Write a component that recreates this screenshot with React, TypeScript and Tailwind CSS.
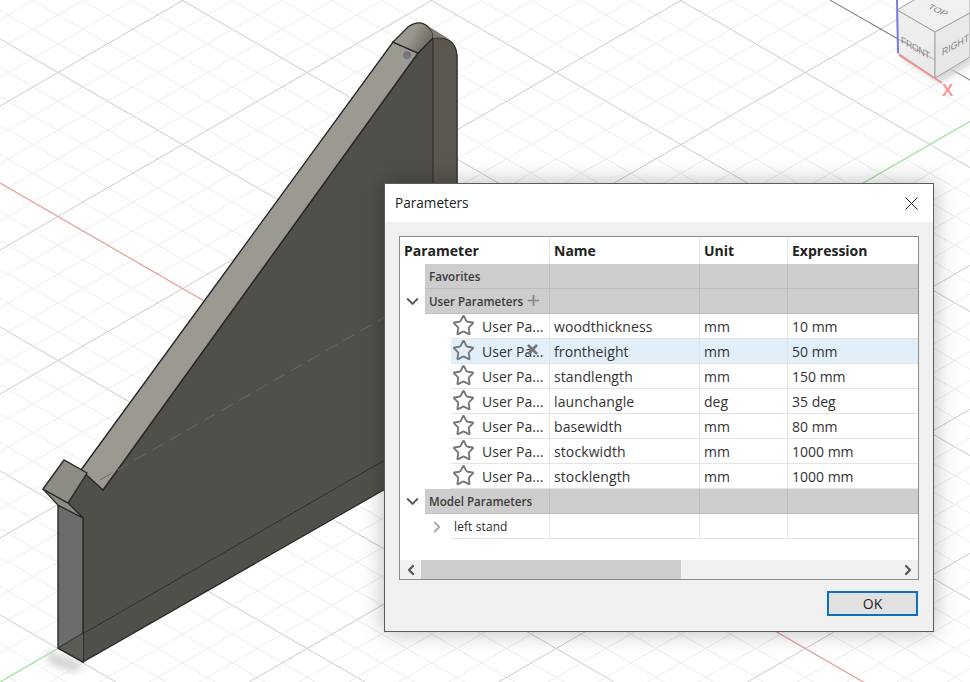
import React from "react";
import { ChevronDown, ChevronLeft, ChevronRight, Plus, Star, X } from "lucide-react";

const SLOPE = 0.578;
const W = 970;
const H = 682;

const userParams = [
  { name: "woodthickness", unit: "mm", expr: "10 mm" },
  { name: "frontheight", unit: "mm", expr: "50 mm", active: true },
  { name: "standlength", unit: "mm", expr: "150 mm" },
  { name: "launchangle", unit: "deg", expr: "35 deg" },
  { name: "basewidth", unit: "mm", expr: "80 mm" },
  { name: "stockwidth", unit: "mm", expr: "1000 mm" },
  { name: "stocklength", unit: "mm", expr: "1000 mm" },
];

// every 5th line of the ground grid is a major one
const gridOffsets: { k: number; major: boolean }[] = [];
for (let i = -30; i <= 50; i++) gridOffsets.push({ k: i * 28.8, major: i % 5 === 0 });

const Scene: React.FC = () => (
  <svg className="absolute inset-0" width={W} height={H} viewBox={`0 0 ${W} ${H}`}>
    <defs>
      <linearGradient id="cap" x1="0" y1="0" x2="1" y2="0.4">
        <stop offset="0" stopColor="#a5a298" />
        <stop offset="0.55" stopColor="#98958b" />
        <stop offset="1" stopColor="#6c6a62" />
      </linearGradient>
      <filter id="soft">
        <feGaussianBlur stdDeviation="4" />
      </filter>
    </defs>

    {gridOffsets.map(({ k, major }) => (
      <g key={k} stroke={major ? "#cbcbcb" : "#ececec"} strokeWidth="1">
        <line x1={0} y1={183 + k} x2={W} y2={183 + k + W * SLOPE} />
        <line x1={0} y1={106 + k} x2={W} y2={106 + k - W * SLOPE} />
      </g>
    ))}
    <line x1={0} y1={183} x2={W} y2={183 + W * SLOPE} stroke="#f0a0a0" strokeWidth="1.2" />
    <line x1={0} y1={682} x2={W} y2={682 - W * SLOPE} stroke="#a4e6a4" strokeWidth="1.2" />
    <line x1={830} y1={0} x2={970} y2={80} stroke="#777777" strokeWidth="1" />

    {/* shadow under the part */}
    <polygon points="46,650 84,664 76,672 50,664" fill="#cfcfcf" filter="url(#soft)" />

    {/* side face */}
    <path
      d="M83 518 L68 503 L87 473 L103 490 L418 53 L433 38 L442 38 Q456 40 457 56 L457 448 L83 662 Z"
      fill="#504f4a"
      stroke="#26262a"
      strokeWidth="1.2"
    />
    <path d="M433 38 L442 38 Q456 40 457 56 L457 200 L433 200 Z" fill="#5b574f" stroke="#2b2b2b" strokeWidth="1" />

    {/* sloped top */}
    <polygon points="81,470 393,42 418,53 103,490" fill="#9c9a90" stroke="#26262a" strokeWidth="1.4" />
    <path d="M393 42 L408 27 Q418 20 426 25 Q434 31 433 38 L418 53 Z" fill="url(#cap)" stroke="#26262a" strokeWidth="1.2" />
    <path d="M423 23 L449 39 Q440 36 433 38 Q434 29 423 23 Z" fill="#7d7a71" />
    <circle cx="407" cy="55" r="4" fill="#77767a" />

    {/* dashed and hidden edges */}
    <line x1={100} y1={480} x2={385} y2={317} stroke="#6a6962" strokeWidth="1" strokeDasharray="13 7" />
    <line x1={58} y1={648} x2={385} y2={460} stroke="#2f2f2c" strokeWidth="1" />

    {/* front post and tab */}
    <polygon points="58,505 83,518 83,662 58,648" fill="#6a6d6c" stroke="#2b2b2b" strokeWidth="1.4" />
    <polygon points="58,648 83,633 83,662" fill="#5d5b54" />
    <polygon points="43,489 68,503 83,518 58,505" fill="#8e8c84" stroke="#2b2b2b" strokeWidth="1.2" />
    <polygon points="43,489 64,460 87,473 68,503" fill="#8e8c84" stroke="#2b2b2b" strokeWidth="1.4" />
    <line x1={58} y1={648} x2={83} y2={633} stroke="#2f2f2c" strokeWidth="1" />
    <line x1={58} y1={648} x2={83} y2={662} stroke="#2b2b2b" strokeWidth="1.4" />

    {/* view cube */}
    <polygon points="900,56 940,82 975,60 960,40" fill="#cfcfcf" filter="url(#soft)" />
    <g stroke="#a2a2a2" strokeWidth="1">
      <polygon points="897,10 935,-12 970,-8 970,13 935,32" fill="#efefef" fillOpacity="0.95" />
      <polygon points="897,10 935,32 935,78 898,53" fill="#ececec" fillOpacity="0.9" />
      <polygon points="935,32 970,13 970,57 935,78" fill="#e8e8e8" fillOpacity="0.95" />
    </g>
    <line x1={870} y1={23} x2={935} y2={60} stroke="#777777" strokeWidth="1" strokeOpacity="0.45" />
    <line x1={897} y1={0} x2={898} y2={53} stroke="#7a7ae4" strokeWidth="2" />
    <line x1={899} y1={55} x2={942} y2={83} stroke="#ee9292" strokeWidth="2" />
    <g fontFamily="'Liberation Sans', sans-serif" fill="#858585" fontSize="10">
      <text transform="matrix(0.87 0.42 -0.6 0.6 927 8)">TOP</text>
      <text transform="matrix(0.87 0.5 0 1 901 43)" letterSpacing="-0.3">FRONT</text>
      <text transform="matrix(0.87 -0.5 0 1 942 56)">RIGHT</text>
    </g>
    <text x={942} y={96} fontFamily="'Liberation Sans', sans-serif" fontSize="17" fontWeight="bold" fill="#f29a9a">
      X
    </text>
  </svg>
);

const HeaderCell: React.FC<{ label: string }> = ({ label }) => (
  <div className="flex items-center pl-1 border-r border-[#e6e6e6] last:border-r-0 font-bold text-[14px] text-[#222222]">
    {label}
  </div>
);

const GroupRow: React.FC<{ label?: string; open?: boolean; plus?: boolean }> = ({ label, open, plus }) => (
  <div className="grid grid-cols-[150px_150px_88px_130px] h-[25px]">
    <div className="flex">
      <div className="w-[25px] flex items-center justify-center">
        {open && <ChevronDown size={19} strokeWidth={2.6} className="text-[#555555]" />}
      </div>
      <div className="flex-1 flex items-center gap-[2px] pl-1 pt-[1px] bg-[#cdcdcd] border-b border-r border-[#bdbdbd] text-[11.6px] font-semibold text-[#3a3a3a]">
        {label}
        {plus && <Plus size={17} strokeWidth={2.4} className="text-[#858585] -mt-[3px]" />}
      </div>
    </div>
    <div className="bg-[#cdcdcd] border-b border-r border-[#bdbdbd]" />
    <div className="bg-[#cdcdcd] border-b border-r border-[#bdbdbd]" />
    <div className="bg-[#cdcdcd] border-b border-[#bdbdbd]" />
  </div>
);

const ParamRow: React.FC<{ name: string; unit: string; expr: string; active?: boolean }> = ({
  name,
  unit,
  expr,
  active,
}) => {
  const bg = active ? "bg-[#e1effa]" : "bg-white";
  return (
    <div className="grid grid-cols-[150px_150px_88px_130px] h-[25px] text-[14px] text-[#333333]">
      <div className="flex">
        <div className="w-[51px]" />
        <div className={`relative flex-1 flex items-center border-b border-r border-[#e4e4e4] ${bg}`}>
          <Star size={23} strokeWidth={2} className="ml-[1px] -mt-[2px] text-[#777777] shrink-0" />
          <span className="ml-[7px] whitespace-nowrap">User Pa...</span>
          {active && (
            <X size={15} strokeWidth={4.4} className="absolute left-[74px] top-[3px] text-[#777777]" />
          )}
        </div>
      </div>
      <div className={`flex items-center pl-[4px] tracking-[0.1px] border-b border-r border-[#e4e4e4] ${bg}`}>
        {name}
      </div>
      <div className={`flex items-center pl-[4px] border-b border-r border-[#e4e4e4] ${bg}`}>{unit}</div>
      <div className={`flex items-center pl-[4px] border-b border-[#e4e4e4] ${bg}`}>{expr}</div>
    </div>
  );
};

const ModelRow: React.FC = () => (
  <div className="grid grid-cols-[150px_150px_88px_130px] h-[25px] text-[#2a2a2a]">
    <div className="flex">
      <div className="w-[51px] flex items-center justify-end pr-[5px]">
        <ChevronRight size={18} strokeWidth={2.4} className="text-[#aaaaaa]" />
      </div>
      <div className="flex-1 flex items-center pl-[3px] pt-[1px] border-b border-r border-[#e4e4e4] text-[12px] font-medium tracking-[0.1px]">
        left stand
      </div>
    </div>
    <div className="border-b border-r border-[#e4e4e4]" />
    <div className="border-b border-r border-[#e4e4e4]" />
    <div className="border-b border-[#e4e4e4]" />
  </div>
);

const ParametersDialog: React.FC = () => (
  <div className="absolute left-[384px] top-[183px] w-[550px] h-[449px] flex flex-col bg-[#f0f0f0] border border-[#5a5a5a] shadow-[0_0_22px_rgba(0,0,0,0.28)] font-['Open_Sans',sans-serif]">
    <div className="h-[38px] shrink-0 bg-white flex items-center justify-between pl-[10px] pr-[15px] text-[13.6px] text-[#222222]">
      <span>Parameters</span>
      <svg width="13" height="13" viewBox="0 0 13 13" stroke="#222222" strokeWidth="1">
        <line x1="0.5" y1="0.5" x2="12.5" y2="12.5" />
        <line x1="12.5" y1="0.5" x2="0.5" y2="12.5" />
      </svg>
    </div>

    <div className="mt-[14px] ml-[14px] w-[520px] h-[344px] flex flex-col bg-white border border-[#8c8c8c]">
      <div className="grid grid-cols-[150px_150px_88px_130px] h-[27px] shrink-0">
        <HeaderCell label="Parameter" />
        <HeaderCell label="Name" />
        <HeaderCell label="Unit" />
        <HeaderCell label="Expression" />
      </div>
      <GroupRow label="Favorites" />
      <GroupRow label="User Parameters" open plus />
      {userParams.map((p) => (
        <ParamRow key={p.name} {...p} />
      ))}
      <GroupRow label="Model Parameters" open />
      <ModelRow />
      <div className="flex-1" />
      <div className="h-[19px] flex items-center bg-[#f0f0f0]">
        <div className="w-[21px] flex justify-center">
          <ChevronLeft size={16} strokeWidth={3.2} className="text-[#555555]" />
        </div>
        <div className="w-[260px] h-full bg-[#cdcdcd]" />
        <div className="flex-1" />
        <div className="w-[21px] flex justify-center">
          <ChevronRight size={16} strokeWidth={3.2} className="text-[#555555]" />
        </div>
      </div>
    </div>

    <div className="mt-[11px] mr-[15px] flex justify-end">
      <button className="w-[91px] h-[25px] bg-[#e1e1e1] border-2 border-[#0c6fc0] text-[14px] text-[#222222] leading-none">
        OK
      </button>
    </div>
  </div>
);

const App: React.FC = () => {
  return (
    <div className="relative w-[970px] h-[682px] overflow-hidden bg-white">
      <Scene />
      <ParametersDialog />
    </div>
  );
};

export default App;
